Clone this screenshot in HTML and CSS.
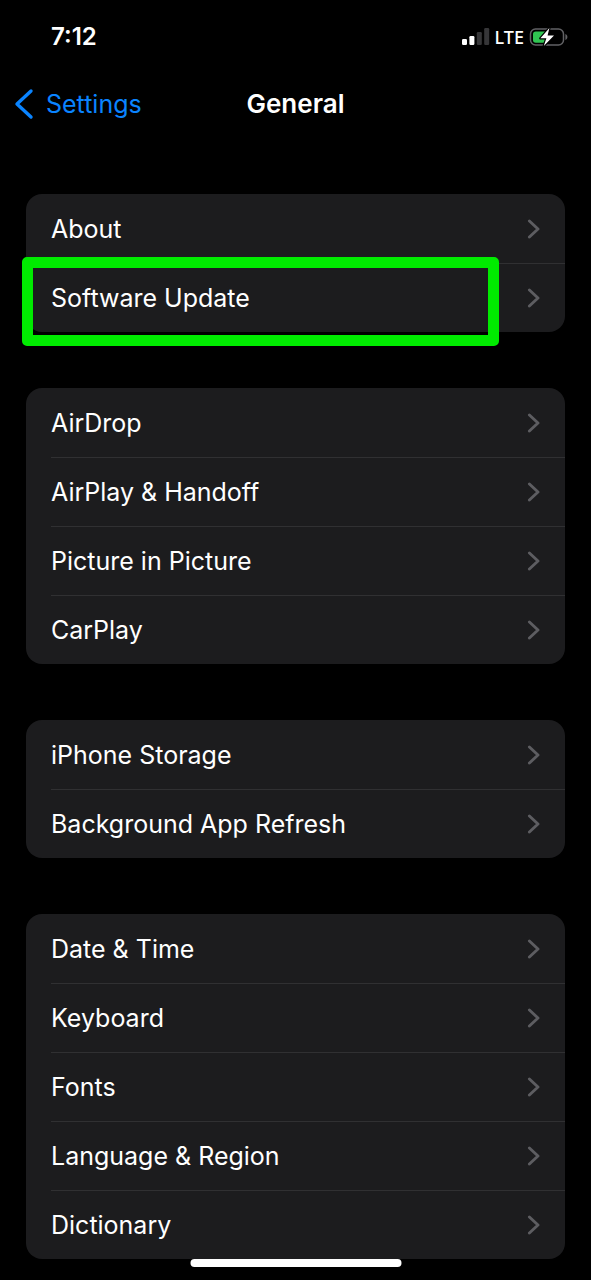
FILE: index.html
```html
<!DOCTYPE html>
<html lang="en">
<head>
<meta charset="utf-8">
<meta name="viewport" content="width=device-width, initial-scale=1">
<title>General</title>
<link rel="stylesheet" href="styles.css">
</head>
<body>
<svg class="symbols" aria-hidden="true">
  <symbol id="chevron" viewBox="0 0 14 20"><path d="M2.4 2 11 10 2.4 18" fill="none" stroke="currentColor" stroke-width="2.9" stroke-linecap="round" stroke-linejoin="round"/></symbol>
</svg>
<div class="status-bar">
  <time class="clock">7:12</time>
  <div class="indicators">
    <svg class="signal" width="28" height="18" viewBox="0 0 28 18" role="img" aria-label="Signal: two of four bars">
      <rect x="0" y="11" width="5" height="6" rx="1.2" fill="#fff"/>
      <rect x="7.4" y="8" width="5" height="9" rx="1.2" fill="#fff"/>
      <rect x="14.8" y="4" width="5" height="13" rx="1.2" fill="#363638"/>
      <rect x="22.2" y="0" width="5" height="17" rx="1.2" fill="#363638"/>
    </svg>
    <span class="network">LTE</span>
    <svg class="battery" width="40" height="20" viewBox="0 0 40 20" role="img" aria-label="Battery charging">
      <rect x="1.5" y="2" width="33" height="16" rx="5" fill="none" stroke="#626265" stroke-width="1.5"/>
      <path d="M36.4 7v6c1.3-.6 2-1.7 2-3s-.7-2.4-2-3z" fill="#626265"/>
      <rect x="4" y="4.4" width="14" height="11.4" rx="2.8" fill="#30c552"/>
      <path d="M20.4 1 11.4 11.3h6L14.8 19 25 8.4h-6.4z" fill="#fff" stroke="#000" stroke-width="2.4" stroke-linejoin="round" paint-order="stroke"/>
    </svg>
  </div>
</div>
<header class="nav-bar">
  <a class="back" href="#settings">
    <svg class="back-icon" width="20" height="32" viewBox="0 0 20 32" aria-hidden="true"><path d="M17 3 3 16 17 29" fill="none" stroke="currentColor" stroke-width="3.4" stroke-linecap="round" stroke-linejoin="round"/></svg>
    <span>Settings</span>
  </a>
  <h1 class="title">General</h1>
</header>
<main class="groups">
  <ul class="group">
    <li class="item"><a class="row" href="#about">About<svg class="chevron"><use href="#chevron"/></svg></a></li>
    <li class="item highlighted"><a class="row" href="#software-update">Software Update<svg class="chevron"><use href="#chevron"/></svg></a></li>
  </ul>
  <ul class="group">
    <li class="item"><a class="row" href="#airdrop">AirDrop<svg class="chevron"><use href="#chevron"/></svg></a></li>
    <li class="item"><a class="row" href="#airplay">AirPlay &amp; Handoff<svg class="chevron"><use href="#chevron"/></svg></a></li>
    <li class="item"><a class="row" href="#pip">Picture in Picture<svg class="chevron"><use href="#chevron"/></svg></a></li>
    <li class="item"><a class="row" href="#carplay">CarPlay<svg class="chevron"><use href="#chevron"/></svg></a></li>
  </ul>
  <ul class="group">
    <li class="item"><a class="row" href="#storage">iPhone Storage<svg class="chevron"><use href="#chevron"/></svg></a></li>
    <li class="item"><a class="row" href="#refresh">Background App Refresh<svg class="chevron"><use href="#chevron"/></svg></a></li>
  </ul>
  <ul class="group">
    <li class="item"><a class="row" href="#date">Date &amp; Time<svg class="chevron"><use href="#chevron"/></svg></a></li>
    <li class="item"><a class="row" href="#keyboard">Keyboard<svg class="chevron"><use href="#chevron"/></svg></a></li>
    <li class="item"><a class="row" href="#fonts">Fonts<svg class="chevron"><use href="#chevron"/></svg></a></li>
    <li class="item"><a class="row" href="#language">Language &amp; Region<svg class="chevron"><use href="#chevron"/></svg></a></li>
    <li class="item"><a class="row" href="#dictionary">Dictionary<svg class="chevron"><use href="#chevron"/></svg></a></li>
  </ul>
</main>
<div class="home-indicator"></div>
</body>
</html>
```
FILE: styles.css
```css
* { box-sizing: border-box; }
body {
  margin: 0;
  background: #000;
  color: #fff;
  font-family: Inter, "Liberation Sans", sans-serif;
  font-size: 25px;
  line-height: 32px;
}
a { color: inherit; text-decoration: none; }
.symbols { display: none; }
.status-bar {
  display: flex;
  align-items: center;
  justify-content: space-between;
  height: 74px;
  padding: 0 22px 0 51px;
}
.clock { font-size: 24px; font-weight: 600; }
.indicators { display: flex; align-items: center; gap: 5px; }
.network { font-family: "Noto Sans", sans-serif; font-size: 18px; font-weight: 500; }
.nav-bar {
  display: grid;
  grid-template-columns: 1fr auto 1fr;
  align-items: center;
  height: 60px;
  padding: 0 14px;
}
.back { display: flex; align-items: center; gap: 12px; color: #0a84ff; }
.title { margin: 0; font-size: 26px; font-weight: 600; }
.groups {
  display: flex;
  flex-direction: column;
  gap: 56px;
  padding: 60px 26px 20px;
}
.group {
  margin: 0;
  padding: 0;
  list-style: none;
  background: #1c1c1e;
  border-radius: 16px;
}
.item { position: relative; padding-left: 25px; }
.row {
  display: flex;
  align-items: center;
  justify-content: space-between;
  height: 69px;
  padding-right: 24px;
}
.item + .item .row { border-top: 1px solid #303032; }
.chevron { width: 14px; height: 20px; color: #5d5d61; }
.highlighted::after {
  content: "";
  position: absolute;
  inset: -6px 66px -14px -4px;
  border: 11px solid #00eb00;
  border-radius: 5px;
  pointer-events: none;
}
.home-indicator {
  position: fixed;
  bottom: 13px;
  left: 50%;
  width: 211px;
  height: 8px;
  border-radius: 4px;
  background: #fff;
  transform: translateX(-50%);
}
```
